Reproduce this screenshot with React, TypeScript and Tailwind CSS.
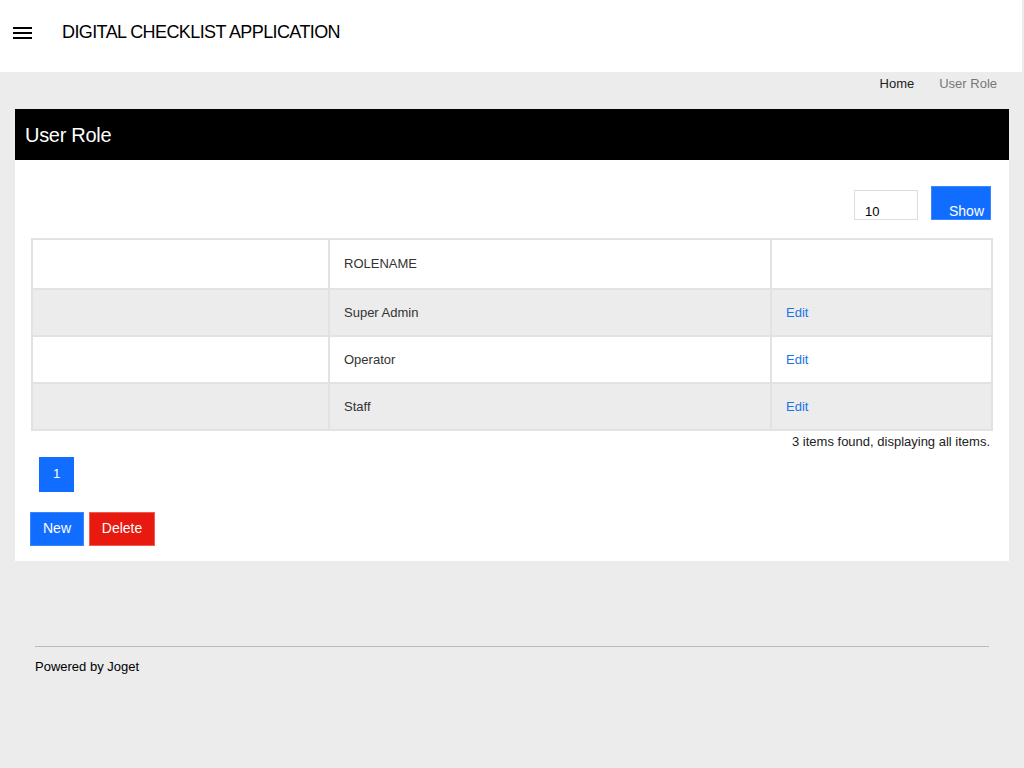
import { useState } from 'react';

const rows = [
  { name: 'Super Admin' },
  { name: 'Operator' },
  { name: 'Staff' },
];

// ─── Header ───────────────────────────────────────────────────────────────────
function Header() {
  return (
    <header className="h-[72px] w-[1022px] bg-white flex items-center">
      <button className="ml-[13px] w-[19px] flex flex-col gap-[3px] -mt-[6px]">
        <span className="block h-[2px] bg-black" />
        <span className="block h-[2px] bg-black" />
        <span className="block h-[2px] bg-black" />
      </button>
      <h1 className="ml-[30px] text-[18px] text-black tracking-[-0.6px] -mt-[8px]">
        DIGITAL CHECKLIST APPLICATION
      </h1>
    </header>
  );
}

// ─── Role table ───────────────────────────────────────────────────────────────
function RoleTable() {
  return (
    <table className="w-[962px] ml-[16px] border-collapse text-[13px] text-[#333]">
      <thead>
        <tr className="h-[50px] bg-white">
          <th className="w-[297px] border-2 border-[#e2e2e2] border-b-[#bbb] border-b" />
          <th className="w-[442px] border-2 border-[#e2e2e2] border-b-[#bbb] border-b text-left font-normal pl-[14px]">
            ROLENAME
          </th>
          <th className="border-2 border-[#e2e2e2] border-b-[#bbb] border-b" />
        </tr>
      </thead>
      <tbody>
        {rows.map((r, i) => (
          <tr key={r.name} className={i % 2 === 0 ? 'h-[47px] bg-[#ececec]' : 'h-[47px] bg-white'}>
            <td className="border-2 border-[#e2e2e2]" />
            <td className="border-2 border-[#e2e2e2] pl-[14px]">{r.name}</td>
            <td className="border-2 border-[#e2e2e2] pl-[14px]">
              <a className="text-[#1a73e8] cursor-pointer">Edit</a>
            </td>
          </tr>
        ))}
      </tbody>
    </table>
  );
}

export default function App() {
  const [pageSize, setPageSize] = useState('10');

  return (
    <div className="min-h-[768px] bg-[#ececec] font-['Liberation_Sans',Arial,sans-serif]">
      <Header />

      {/* Breadcrumb */}
      <div className="h-[37px] flex justify-end items-start gap-[25px] pr-[27px] pt-[2px] text-[13px]">
        <span className="text-[#222]">Home</span>
        <span className="text-[#777]">User Role</span>
      </div>

      {/* Main panel */}
      <div className="mx-[15px] w-[994px]">
        <div className="h-[51px] bg-black flex items-center px-[10px]">
          <h2 className="text-white text-[20px] tracking-[-0.3px]">User Role</h2>
        </div>

        <div className="bg-white pb-[15px]">
          <div className="flex justify-end items-end gap-[13px] pt-[26px] pr-[18px] h-[60px]">
            <input
              value={pageSize}
              onChange={(e) => setPageSize(e.target.value)}
              className="w-[64px] h-[30px] border border-[#ddd] text-[13px] px-[10px] pt-[12px] outline-none"
            />
            <button className="w-[60px] h-[34px] bg-[#116dff] border border-[#3b86ff] text-white text-[14px] leading-[14px] flex items-end justify-end pr-[6px] pb-[1px]">
              Show
            </button>
          </div>

          <div className="mt-[18px]">
            <RoleTable />
          </div>

          <div className="w-[978px] text-right text-[13px] text-[#222] mt-[1px] pr-[3px]">
            3 items found, displaying all items.
          </div>

          <div className="mt-[5px] ml-[24px]">
            <span className="w-[35px] h-[35px] bg-[#116dff] text-white text-[13px] flex items-center justify-center">
              1
            </span>
          </div>

          <div className="flex gap-[5px] mt-[20px] ml-[15px]">
            <button className="w-[54px] h-[34px] bg-[#116dff] border border-[#3b86ff] text-white text-[14px]">
              New
            </button>
            <button className="w-[66px] h-[34px] bg-[#e8190e] border border-[#f25a52] text-white text-[14px]">
              Delete
            </button>
          </div>
        </div>
      </div>

      {/* Footer */}
      <footer className="mx-[35px] mt-[85px] border-t border-[#bbb] pt-[10px] text-[13px] text-black">
        Powered by Joget
      </footer>
    </div>
  );
}
